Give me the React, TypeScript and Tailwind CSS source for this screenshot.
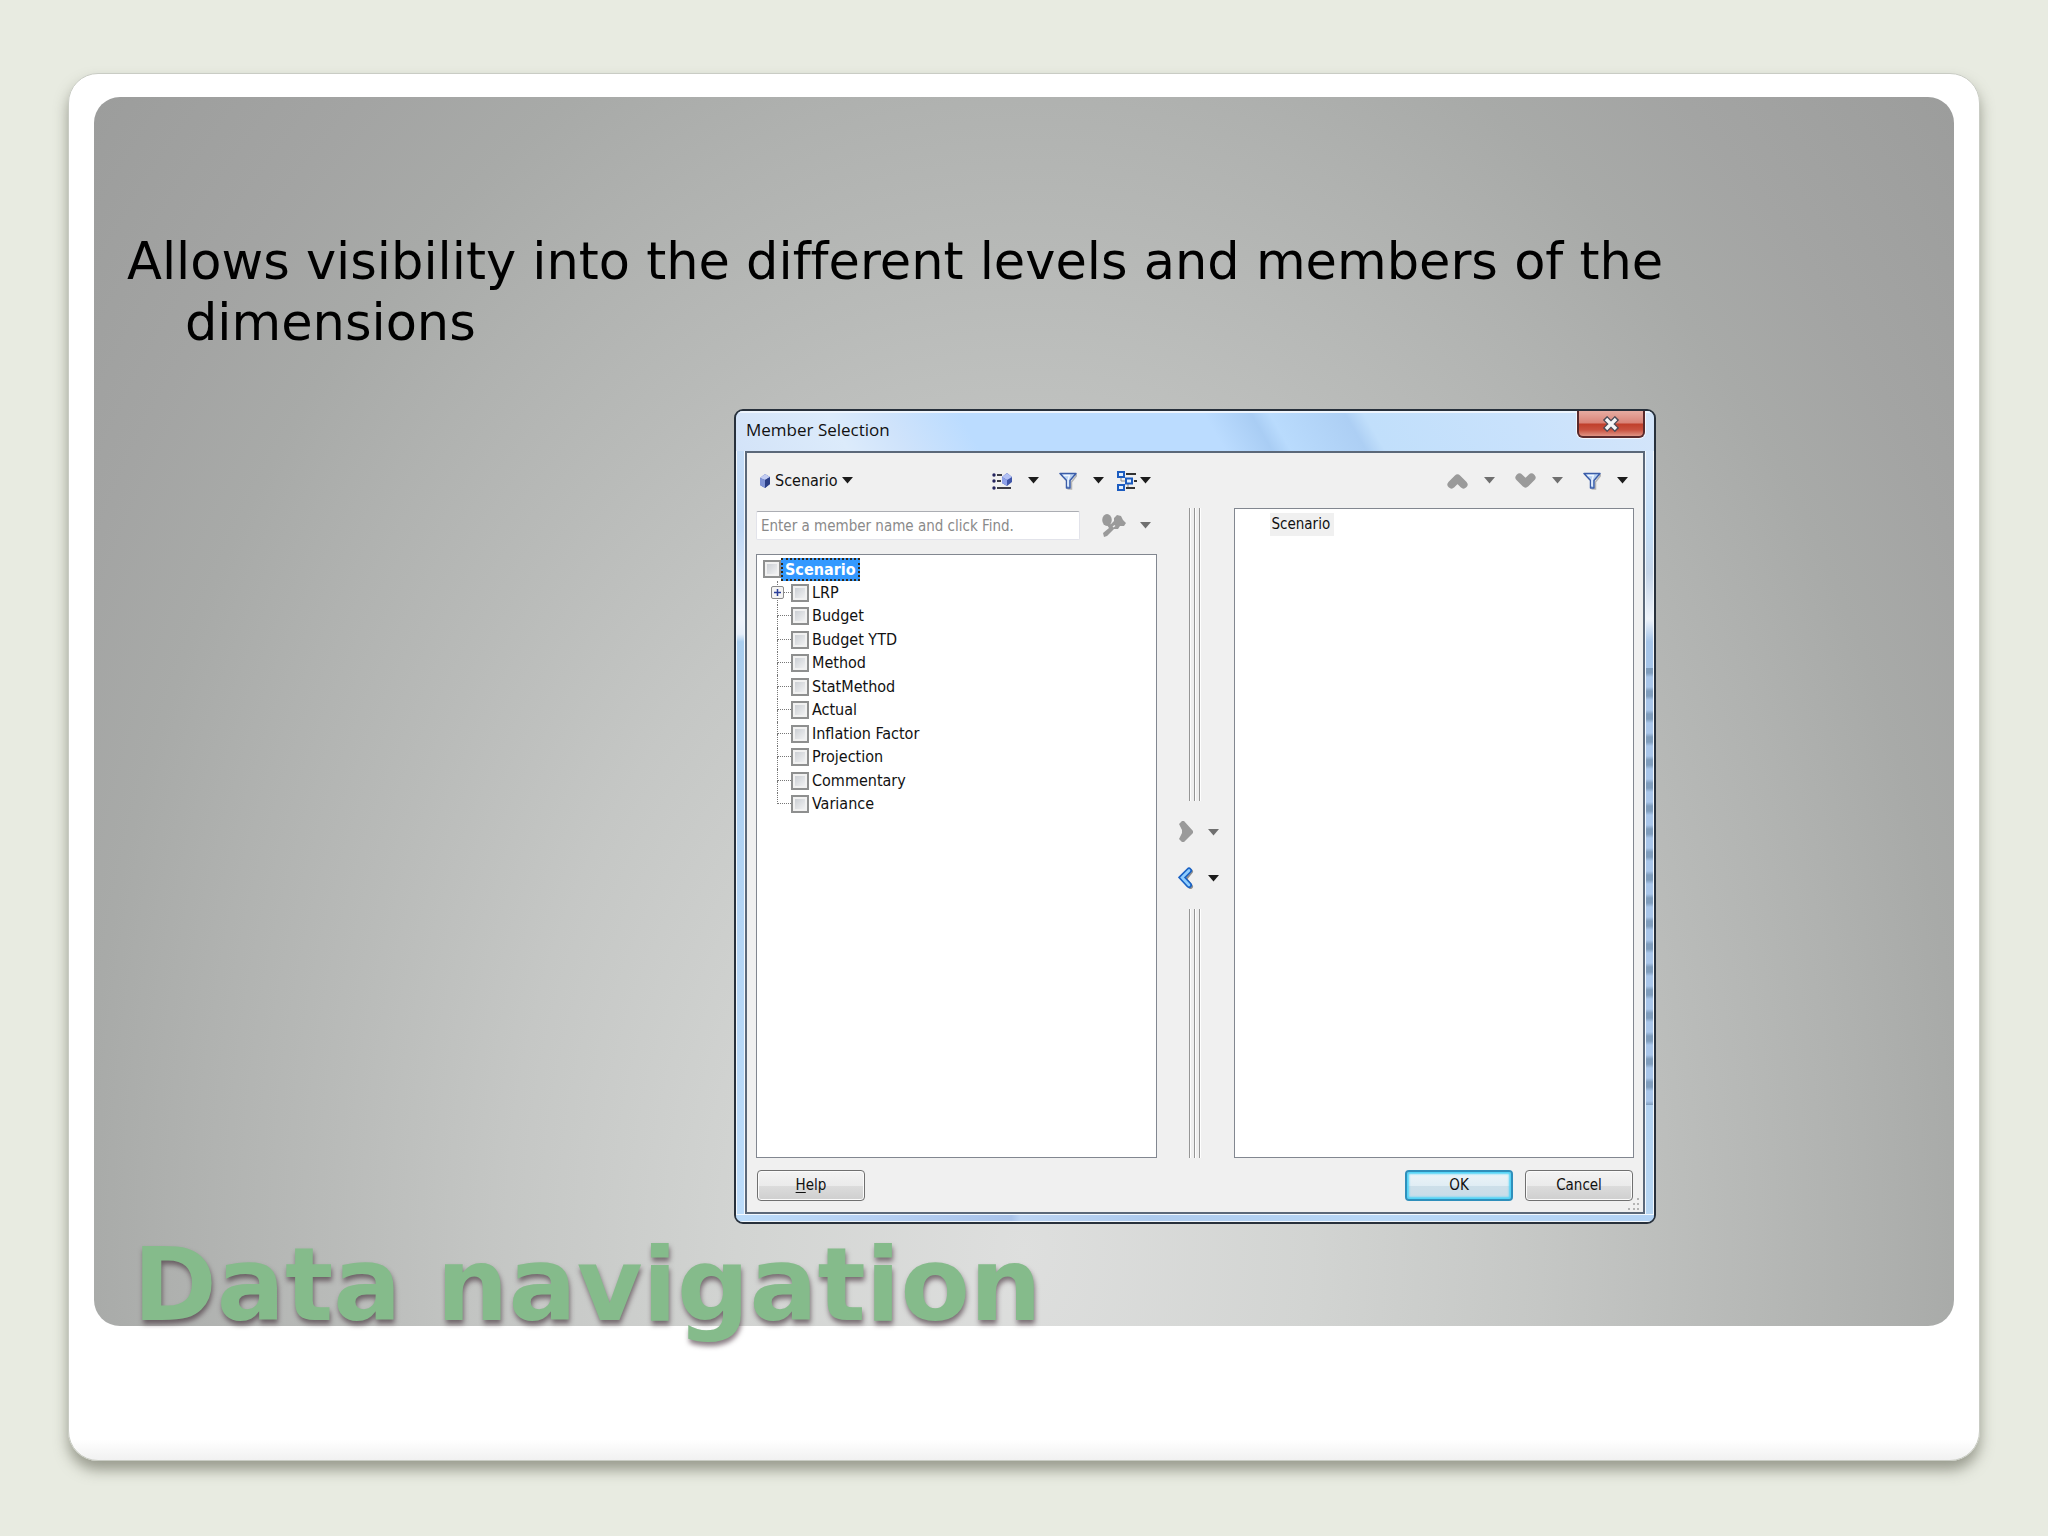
import React, { ReactNode, useState } from 'react';

interface Member {
    name: string;
    expandable?: boolean;
}

const members: Member[] = [
    { name: 'LRP', expandable: true },
    { name: 'Budget' },
    { name: 'Budget YTD' },
    { name: 'Method' },
    { name: 'StatMethod' },
    { name: 'Actual' },
    { name: 'Inflation Factor' },
    { name: 'Projection' },
    { name: 'Commentary' },
    { name: 'Variance' },
];

const checkboxClass =
    'appearance-none w-[18px] h-[18px] flex-shrink-0 border-2 border-[#8e8f8f] bg-gradient-to-br from-[#c4c8ce] to-[#f8f8f8] shadow-[inset_0_0_0_2px_#f1f1f1] checked:from-[#3399ff]';

const Caret: React.FC<{ muted?: boolean }> = ({ muted }) => (
    <svg width="11" height="7" viewBox="0 0 11 7" className={muted ? 'text-[#6f6f6f]' : 'text-[#1c1c1c]'}>
        <path d="M0 0h11L5.500 6.500z" fill="currentColor" />
    </svg>
);

const CubeIcon = () => (
    <svg width="10" height="14" viewBox="0 0 10 14">
        <path d="M0 4l5-4 5 3v7l-5 4-5-3z" fill="#5069b4" />
        <path d="M0 4l5-4 5 3-5 3z" fill="#c3cdf2" />
        <path d="M0 4l5 2v8l-5-3z" fill="#7f93d6" />
        <path d="M5 6l5-3v7l-5 4z" fill="#2b3f86" />
    </svg>
);

const MemberListIcon = () => (
    <svg width="20" height="18" viewBox="0 0 20 18">
        <g fill="#23235c">
            <circle cx="2" cy="3" r="1.700" />
            <circle cx="2" cy="9" r="1.700" />
            <circle cx="2" cy="16" r="1.700" />
        </g>
        <path d="M5 3h5M5 9h4" stroke="#3b3b44" strokeWidth="1.800" />
        <path d="M5 16h14" stroke="#3b3b44" strokeWidth="2" />
        <path d="M10 5l5-4 5 4v5l-5 4-5-3z" fill="#3f55a8" />
        <path d="M10 5l5-4 5 4-5 3z" fill="#b3c1f5" />
        <path d="M10 5l5 3v6l-5-3z" fill="#8fa2ea" />
    </svg>
);

const FunnelIcon = () => (
    <svg width="18" height="18" viewBox="0 0 18 18">
        <path d="M3 3h15l-5.500 7v7h-4" fill="none" stroke="#b5b5b5" strokeWidth="1.500" />
        <path d="M1 1.500h16L11 8.500v7.500H7.500V8.500z" fill="#b9d2f3" stroke="#3a5ca8" strokeWidth="1.500" strokeLinejoin="round" />
        <path d="M4.500 3.500h6L9 8v6" fill="none" stroke="#f0f7ff" strokeWidth="1.300" />
    </svg>
);

const HierarchyIcon = () => (
    <svg width="20" height="20" viewBox="0 0 20 20">
        <path d="M9 3h10M17 10h3M9 17h9" stroke="#333" strokeWidth="2" />
        <path d="M4 7v3h4M11 13v3" fill="none" stroke="#8a8a8a" strokeWidth="1" />
        <g fill="#e3f1ff" stroke="#1c5cc0" strokeWidth="2">
            <rect x="1" y="1" width="6" height="5" />
            <rect x="9" y="7.500" width="6" height="5" />
            <rect x="1" y="14" width="6" height="5" />
        </g>
    </svg>
);

const FindIcon = () => (
    <svg width="24" height="24" viewBox="0 0 24 24" fill="#9a9a9a">
        <ellipse cx="5" cy="6" rx="4.800" ry="6" />
        <path d="M5 11l4-1 3-3V4l3-3 4 1 2 4 3 3-2 3h-4l-2 3h-4l-7 7-3 1-1-4 6-5-2-3z" />
        <path d="M11 13l2-1.500" stroke="#efefef" strokeWidth="1.500" />
    </svg>
);

// Thick rounded chevron, turned with a rotate class
const ChevronIcon: React.FC<{ className?: string }> = ({ className }) => (
    <svg width="21" height="16" viewBox="0 0 21 16" className={className}>
        <path d="M4.500 11.500l6-6 6 6" fill="none" stroke="#9a9a9a" strokeWidth="8" strokeLinecap="round" strokeLinejoin="round" />
    </svg>
);

const MoveRightIcon = () => (
    <svg width="16" height="22" viewBox="0 0 16 22">
        <path d="M1 3l3-3h2l9 10v2L6 21H4l-3-3 3-6v-3z" fill="#9a9a9a" />
    </svg>
);

const MoveLeftIcon = () => (
    <svg width="16" height="22" viewBox="0 0 16 22">
        <path d="M12.500 4.500l-6 7.500 6 7.500" fill="none" stroke="#8f8f8f" strokeWidth="5" strokeLinecap="round" />
        <path d="M11 3.500L4 10.500l7 7.500" fill="none" stroke="#1a62c4" strokeWidth="6" strokeLinecap="round" />
        <path d="M11 3.500L4 10.500l7 7.500" fill="none" stroke="#8fceff" strokeWidth="2.600" strokeLinecap="round" />
    </svg>
);

const ToolButton: React.FC<{ label: string; tight?: boolean; muted?: boolean; children: ReactNode }> = ({
    label,
    tight,
    muted,
    children,
}) => (
    <button aria-label={label} disabled={muted} className={`${tight ? 'gap-[3px]' : 'gap-4'} flex items-center`}>
        {children}
        <Caret muted={muted} />
    </button>
);

const SplitterBar: React.FC<{ className: string }> = ({ className }) => (
    <div className={`${className} flex gap-1 pl-8`}>
        {[0, 1, 2].map((n) => (
            <div key={n} className="w-px bg-[#969696] shadow-[1px_0_0_#ffffff]" />
        ))}
    </div>
);

const MemberTree: React.FC = () => {
    const [checked, setChecked] = useState<string[]>([]);

    const toggle = (name: string) =>
        setChecked((prev) => (prev.includes(name) ? prev.filter((n) => n !== name) : [...prev, name]));

    return (
        <div className="mt-3.5 h-[604px] border border-[#828790] bg-white pt-0.5 text-base leading-5">
            <label className="flex items-center h-6 pl-1.5 font-bold text-white">
                <input
                    type="checkbox"
                    className={checkboxClass}
                    checked={checked.includes('Scenario')}
                    onChange={() => toggle('Scenario')}
                />
                <span className="h-[23px] leading-[19px] px-0.5 border-2 border-dotted border-[#33291a] bg-[#3399ff]">
                    Scenario
                </span>
            </label>
            <ul className="grid auto-rows-fr h-[235px] pl-5">
                {members.map((member, index) => (
                    <li key={member.name} className="relative flex items-center">
                        <span className="self-stretch w-3.5 flex flex-col">
                            <span className="h-1/2 border-l border-b border-dotted border-[#777]" />
                            {index < members.length - 1 && (
                                <span className="h-1/2 border-l border-dotted border-[#777]" />
                            )}
                        </span>
                        {member.expandable && (
                            <button
                                aria-label={`Expand ${member.name}`}
                                className="absolute -left-1.5 top-[5px] w-[13px] h-[13px] border border-[#8a8a8a] rounded-[2px] bg-[#f4f4f4]"
                            >
                                <svg width="11" height="11" viewBox="0 0 11 11">
                                    <path d="M2 5.500h7M5.500 2v7" stroke="#2b3f9a" strokeWidth="1.500" />
                                </svg>
                            </button>
                        )}
                        <label className="flex items-center gap-[3px]">
                            <input
                                type="checkbox"
                                className={checkboxClass}
                                checked={checked.includes(member.name)}
                                onChange={() => toggle(member.name)}
                            />
                            {member.name}
                        </label>
                    </li>
                ))}
            </ul>
        </div>
    );
};

const MemberSelectionDialog: React.FC = () => (
    <section
        aria-label="Member Selection"
        className="w-[922px] border-2 border-[#27303b] rounded-[9px] overflow-hidden bg-[#b9d6f5] text-[15px] leading-5 text-[#111] font-['DejaVu_Sans_Condensed','DejaVu_Sans',sans-serif]"
    >
        <header className="flex items-start justify-between h-10 pl-2.5 pr-[9px] shadow-[inset_0_2px_0_#eef5fd] bg-[linear-gradient(60deg,#d3e3f8_0%,#dcebfb_12%,#cfe3fb_18%,#bbdcff_26%,#bbdcff_52%,#a9cdf4_57%,#b9dbfd_59%,#adcff4_67%,#c1dffb_69%,#c9e2fc_85%,#d4e5fa_100%)]">
            <h2 className="leading-[38px] text-[17px] font-['Open_Sans',sans-serif]">Member Selection</h2>
            <button
                aria-label="Close"
                className="flex items-center justify-center w-[68px] h-[27px] border-2 border-t-0 border-[#5a2a2c] rounded-b-md bg-[linear-gradient(180deg,#e6aca2_0%,#d98377_48%,#c03f2b_52%,#c8513f_75%,#e09484_100%)] shadow-[0_0_0_1px_#f3f8fe]"
            >
                <svg width="18" height="16" viewBox="0 0 18 16">
                    <path d="M3 2l12 12M15 2L3 14" stroke="#4c4c58" strokeWidth="6" />
                    <path d="M4 3l10 10M14 3L4 13" stroke="#f6f6f6" strokeWidth="3.400" />
                </svg>
            </button>
        </header>
        <div className="flex">
            <div className="w-[9px] border-x border-[#f2f8fe] bg-[linear-gradient(180deg,#c4dcf7_0%,#bdd6f4_10%,#eef3fb_22%,#e4edf9_24%,#a9cdee_25%,#b3d4f4_60%,#bcdcfa_100%)]" />
            <div className="relative flex-1 px-[9px] border-2 border-[#5b6879] bg-[#f0f0f0]">
                <div className="flex">
                    <div className="flex-1">
                        <div className="flex items-center justify-between h-[55px] pl-1 pr-1.5">
                            <button className="flex items-center gap-[5px] text-base">
                                <CubeIcon />
                                <span className="flex items-center gap-1">
                                    Scenario
                                    <Caret />
                                </span>
                            </button>
                            <div className="flex items-center gap-5">
                                <ToolButton label="Display">
                                    <MemberListIcon />
                                </ToolButton>
                                <div className="flex items-center gap-[13px]">
                                    <ToolButton label="Filter">
                                        <FunnelIcon />
                                    </ToolButton>
                                    <ToolButton label="Hierarchy" tight>
                                        <HierarchyIcon />
                                    </ToolButton>
                                </div>
                            </div>
                        </div>
                        <div className="flex items-center justify-between pt-[3px] pr-1.5">
                            <input
                                type="text"
                                aria-label="Member name"
                                placeholder="Enter a member name and click Find."
                                className="w-[324px] h-[29px] px-1 border border-[#e2e3ea] border-t-[#abadb3] rounded-[2px] bg-white placeholder:text-[#8a8a8a]"
                            />
                            <button aria-label="Find" disabled className="flex items-center gap-3.5">
                                <FindIcon />
                                <Caret muted />
                            </button>
                        </div>
                        <MemberTree />
                    </div>
                    <div className="w-[77px] pt-[55px] flex flex-col">
                        <SplitterBar className="h-[293px]" />
                        <div className="flex-1 flex flex-col justify-center gap-6 pl-[21px]">
                            <button aria-label="Add" disabled className="flex items-center gap-3.5">
                                <MoveRightIcon />
                                <Caret muted />
                            </button>
                            <button aria-label="Remove" className="flex items-center gap-3.5">
                                <MoveLeftIcon />
                                <Caret />
                            </button>
                        </div>
                        <SplitterBar className="h-[249px]" />
                    </div>
                    <div className="flex-1 flex flex-col">
                        <div className="flex items-center justify-end gap-5 h-[55px] pr-1.5">
                            <ToolButton label="Move up" muted>
                                <ChevronIcon />
                            </ToolButton>
                            <ToolButton label="Move down" muted>
                                <ChevronIcon className="rotate-180" />
                            </ToolButton>
                            <ToolButton label="Filter selection">
                                <FunnelIcon />
                            </ToolButton>
                        </div>
                        <ul className="flex-1 border border-[#828790] bg-white pt-1 pl-[35px]">
                            <li className="w-fit h-[23px] leading-[23px] pl-0.5 pr-1 bg-[#f0f0f0]">Scenario</li>
                        </ul>
                    </div>
                </div>
                <footer className="flex items-center gap-3 h-[54px] px-px">
                    <button className="w-[108px] h-[31px] mr-auto border border-[#707070] rounded-[4px] bg-[linear-gradient(180deg,#f3f3f3_0%,#ebebeb_50%,#dcdcdc_51%,#cfcfcf_100%)] shadow-[inset_0_0_0_1px_#fbfbfb]">
                        <span className="underline underline-offset-2">H</span>elp
                    </button>
                    <button className="w-[108px] h-[31px] border-2 border-[#2f8fbb] rounded-[4px] bg-[linear-gradient(180deg,#edf4f8_0%,#e0edf4_50%,#cddfe9_51%,#c8dce8_100%)] shadow-[inset_0_0_2px_2px_#4fd3f7]">
                        OK
                    </button>
                    <button className="w-[108px] h-[31px] border border-[#707070] rounded-[4px] bg-[linear-gradient(180deg,#f3f3f3_0%,#ebebeb_50%,#dcdcdc_51%,#cfcfcf_100%)] shadow-[inset_0_0_0_1px_#fbfbfb]">
                        Cancel
                    </button>
                </footer>
                <svg width="12" height="12" viewBox="0 0 12 12" className="absolute right-[3px] bottom-0.5" fill="#b4b4b4">
                    <path d="M9 0h2v2H9zM9 5h2v2H9zM9 10h2v2H9zM5 5h2v2H5zM5 10h2v2H5zM0 10h2v2H0z" />
                </svg>
            </div>
            <div className="relative w-[9px] border-x border-[#f2f8fe] bg-[linear-gradient(180deg,#d4e6fb_0%,#c2def8_10%,#c5d5e9_16%,#eef3fa_22%,#a6c5e9_25%,#a6c5e9_28%,#b7d6f3_100%)]">
                <div className="absolute inset-x-0 top-[217px] h-[437px] bg-[repeating-linear-gradient(180deg,#7f9dbd_0px,#7f9dbd_5px,#a9c6ea_9px,#a9c6ea_19px,#7f9dbd_23px)]" />
            </div>
        </div>
        <div className="h-2 border-y border-[#f2f8fe] bg-[linear-gradient(90deg,#bcdcfa_0%,#b6d0f3_15%,#a9c3ea_30%,#bcd4f3_31%,#aecbee_45%,#b9d8f7_70%,#b3d3f5_100%)]" />
    </section>
);

export default function App() {
    return (
        <main className="min-h-screen pt-[73px] px-[68px] pb-[75px] bg-[#e8ebe1] font-['DejaVu_Sans',sans-serif]">
            <article className="pt-[23px] px-[25px] pb-[125px] border border-[#c9ccc4] rounded-[30px] bg-[linear-gradient(0deg,#f1f1f1_0px,#ffffff_20px)] shadow-[0_9px_14px_rgba(75,78,62,0.5)]">
                <div className="flex flex-col pt-[134px] pb-[102px] pl-[33px] rounded-[26px] bg-[radial-gradient(1150px_1600px_at_50%_94%,#dedfde_0%,#d2d4d2_25%,#c5c7c5_45%,#b9bbb9_60%,#b0b2b0_72%,#a8aaa8_82%,#a3a4a3_92%,#9c9d9c_108%)]">
                    <p className="pl-[58px] -indent-[58px] max-w-[1640px] text-[51px] leading-[61px] text-black [font-variant-ligatures:none]">
                        Allows visibility into the different levels and members of the dimensions
                    </p>
                    <div className="self-end mt-14 mr-[298px]">
                        <MemberSelectionDialog />
                    </div>
                </div>
                <h1 className="-mt-[91px] pl-[39px] text-[101px] leading-[100px] font-bold text-[#85bb8b] [text-shadow:1px_4px_5px_rgba(60,40,50,0.6)]">
                    Data navigation
                </h1>
            </article>
        </main>
    );
}
